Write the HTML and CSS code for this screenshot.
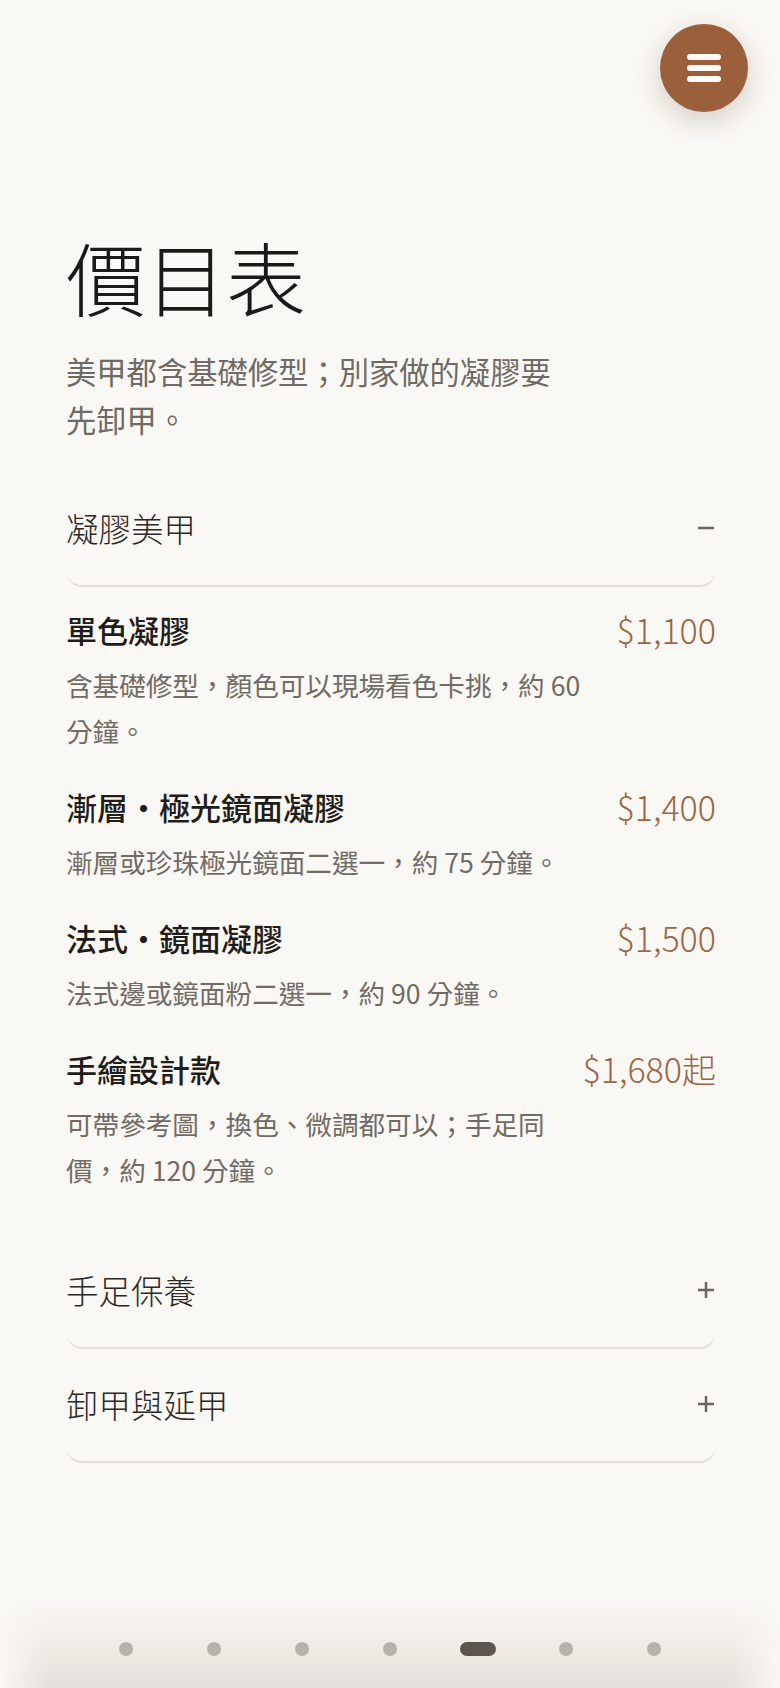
FILE: index.html
```html
<!DOCTYPE html>
<html lang="zh-Hant">
<head>
    <meta charset="UTF-8">
    <meta name="viewport" content="width=device-width, initial-scale=1.0">
    <title>價目表</title>
    <link rel="stylesheet" href="styles.css">
</head>
<body>
    <button class="menu-btn" aria-label="選單">
        <svg width="40" height="28" viewBox="0 0 40 28"><path d="M6 3h28M6 14h28M6 25h28" stroke="#fffaf5" stroke-width="6" stroke-linecap="round"/></svg>
    </button>

    <main class="page">
        <h1 class="title">價目表</h1>
        <p class="lead">美甲都含基礎修型；別家做的凝膠要先卸甲。</p>

        <div class="groups">
            <section class="group">
                <button class="group-head">
                    <span>凝膠美甲</span>
                    <svg class="toggle" width="16" height="16" viewBox="0 0 16 16"><path d="M0 8h16" stroke="#6b6662" stroke-width="2.5"/></svg>
                </button>
                <ul class="items">
                    <li class="item">
                        <div class="item-info">
                            <h3 class="item-name">單色凝膠</h3>
                            <p class="item-desc">含基礎修型，顏色可以現場看色卡挑，約 60 分鐘。</p>
                        </div>
                        <span class="price">$1,100</span>
                    </li>
                    <li class="item">
                        <div class="item-info">
                            <h3 class="item-name">漸層・極光鏡面凝膠</h3>
                            <p class="item-desc">漸層或珍珠極光鏡面二選一，約 75 分鐘。</p>
                        </div>
                        <span class="price">$1,400</span>
                    </li>
                    <li class="item">
                        <div class="item-info">
                            <h3 class="item-name">法式・鏡面凝膠</h3>
                            <p class="item-desc">法式邊或鏡面粉二選一，約 90 分鐘。</p>
                        </div>
                        <span class="price">$1,500</span>
                    </li>
                    <li class="item">
                        <div class="item-info">
                            <h3 class="item-name">手繪設計款</h3>
                            <p class="item-desc">可帶參考圖，換色、微調都可以；手足同價，約 120 分鐘。</p>
                        </div>
                        <span class="price">$1,680起</span>
                    </li>
                </ul>
            </section>

            <section class="group">
                <button class="group-head">
                    <span>手足保養</span>
                    <svg class="toggle" width="16" height="16" viewBox="0 0 16 16"><path d="M0 8h16M8 0v16" stroke="#6b6662" stroke-width="2.5"/></svg>
                </button>
            </section>

            <section class="group">
                <button class="group-head">
                    <span>卸甲與延甲</span>
                    <svg class="toggle" width="16" height="16" viewBox="0 0 16 16"><path d="M0 8h16M8 0v16" stroke="#6b6662" stroke-width="2.5"/></svg>
                </button>
            </section>
        </div>
    </main>

    <nav class="pager">
        <span class="dot"></span>
        <span class="dot"></span>
        <span class="dot"></span>
        <span class="dot"></span>
        <span class="dot active"></span>
        <span class="dot"></span>
        <span class="dot"></span>
    </nav>
</body>
</html>
```

FILE: styles.css
```css
body {
    margin: 0;
    background-color: #faf8f4;
    font-family: "Noto Sans CJK TC", "Noto Sans", sans-serif;
    color: #1f1c1a;
}
.menu-btn {
    position: fixed;
    top: 24px;
    right: 32px;
    width: 88px;
    height: 88px;
    border: none;
    border-radius: 50%;
    background-color: #9c5f3c;
    box-shadow: 0 8px 28px rgba(60, 30, 10, 0.2);
    display: flex;
    align-items: center;
    justify-content: center;
    cursor: pointer;
}
.page {
    padding: 229px 64px 160px 66px;
}
.title {
    margin: 0;
    font-size: 80px;
    font-weight: 300;
    line-height: 92px;
    color: #1c1a18;
}
.lead {
    margin: 26px 0 0;
    max-width: 500px;
    font-size: 30.3px;
    line-height: 48px;
    color: #6f6a65;
}
.groups {
    margin-top: 28px;
}
.group-head {
    width: 100%;
    display: flex;
    align-items: center;
    justify-content: space-between;
    padding: 33px 2px 33px 0;
    border: none;
    border-radius: 16px;
    background: transparent;
    box-shadow: 0 3px 1px -1px rgba(70, 50, 30, 0.14);
    font-family: inherit;
    font-size: 32.5px;
    font-weight: 300;
    line-height: 48px;
    color: #2b2826;
    text-align: left;
    cursor: pointer;
}
.items {
    list-style: none;
    margin: 0;
    padding: 22px 0 40px;
    display: flex;
    flex-direction: column;
    gap: 30px;
}
.item {
    display: flex;
    align-items: flex-start;
    gap: 24px;
}
.item-info {
    flex: 1;
}
.item-name {
    margin: 0;
    font-size: 31px;
    font-weight: 500;
    line-height: 46px;
    color: #1f1c1a;
}
.item-desc {
    margin: 9px 0 0;
    font-size: 26.6px;
    line-height: 46px;
    color: #716b66;
}
.price {
    flex-shrink: 0;
    white-space: nowrap;
    font-size: 34px;
    font-weight: 300;
    line-height: 46px;
    color: #9c6644;
}
.pager {
    position: fixed;
    left: 0;
    right: 0;
    bottom: 0;
    height: 88px;
    box-sizing: border-box;
    padding-bottom: 32px;
    display: grid;
    grid-template-columns: repeat(7, 88px);
    justify-content: center;
    justify-items: center;
    align-items: end;
    background: linear-gradient(to bottom, rgba(80, 60, 40, 0), rgba(80, 60, 40, 0.12));
    -webkit-mask-image: linear-gradient(to right, transparent, #000 48px, #000 calc(100% - 48px), transparent);
}
.dot {
    width: 14px;
    height: 14px;
    border-radius: 7px;
    background-color: #b5b2ac;
}
.dot.active {
    width: 36px;
    background-color: #5f5550;
}
```
